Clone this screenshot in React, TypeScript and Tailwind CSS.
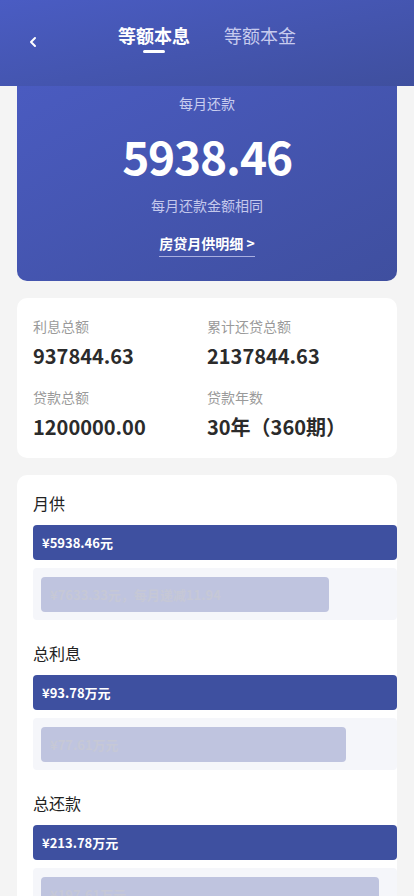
import { ChevronLeft } from "lucide-react";

const font = { fontFamily: '"Noto Sans CJK SC", "Noto Sans", sans-serif' };

const stats = [
  { label: "利息总额", value: "937844.63" },
  { label: "累计还贷总额", value: "2137844.63" },
  { label: "贷款总额", value: "1200000.00" },
  { label: "贷款年数", value: "30年（360期）" },
];

const compare = [
  { title: "月供", main: "¥5938.46元", other: "¥7633.33元，每月递减11.94", width: 288 },
  { title: "总利息", main: "¥93.78万元", other: "¥77.61万元", width: 305 },
  { title: "总还款", main: "¥213.78万元", other: "¥197.61万元", width: 338 },
];

export default function App() {
  return (
    <div
      className="w-[414px] h-[896px] overflow-hidden bg-[#f4f4f4] relative"
      style={font}
    >
      {/* Header */}
      <div className="h-[86px] bg-gradient-to-br from-[#4a5cc3] to-[#3f4f9e] relative flex justify-center">
        <ChevronLeft
          className="absolute left-[25px] top-[34px] text-white"
          size={16}
          strokeWidth={3}
        />
        <div className="flex gap-[34px] pt-[22px]">
          <div className="flex flex-col items-center">
            <span className="text-[18px] font-bold text-white leading-[26px]">
              等额本息
            </span>
            <span className="mt-[2px] w-[22px] h-[3px] bg-white rounded-full" />
          </div>
          <span className="text-[18px] text-[#c7cbee] leading-[26px]">
            等额本金
          </span>
        </div>
      </div>

      {/* Summary card */}
      <div className="mx-[17px] h-[195px] rounded-b-[10px] bg-gradient-to-br from-[#4a5bc0] to-[#3f4f9f] flex flex-col items-center text-center">
        <p className="mt-[7px] text-[14px] leading-[20px] text-[#c9cdef]">每月还款</p>
        <p className="mt-[17px] text-[46px] font-bold leading-[50px] text-white tracking-tight">
          5938.46
        </p>
        <p className="mt-[15px] text-[14px] leading-[20px] text-[#c4c8ec]">每月还款金额相同</p>
        <p className="mt-[18px] text-[14px] font-bold leading-[20px] text-white border-b border-[#a9afe0] pb-[3px]">
          房贷月供明细 &gt;
        </p>
      </div>

      {/* Stats */}
      <div className="mx-[17px] mt-[17px] h-[160px] bg-white rounded-[10px] px-4 pt-[18px] grid grid-cols-2 gap-y-[17px] content-start">
        {stats.map((s) => (
          <div key={s.label}>
            <p className="text-[14px] leading-[20px] text-[#9a9a9a]">{s.label}</p>
            <p className="mt-[6px] text-[20px] font-bold leading-[28px] text-[#2b2b2b]">
              {s.value}
            </p>
          </div>
        ))}
      </div>

      {/* Comparison */}
      <div className="mx-[17px] mt-[17px] bg-white rounded-t-[10px] pl-4 pt-[17px] pb-6">
        {compare.map((c, i) => (
          <div key={c.title} className={i > 0 ? "mt-[22px]" : ""}>
            <p className="text-[16px] leading-[22px] text-[#222]">{c.title}</p>
            <div className="mt-[11px] h-[35px] bg-[#3e50a0] rounded-[4px] flex items-center pl-[9px]">
              <span className="text-[13px] font-bold text-white">{c.main}</span>
            </div>
            <div className="mt-[8px] h-[52px] bg-[#f5f6fa] rounded-[4px] p-[9px_8px]">
              <div
                className="h-[35px] bg-[#bfc4df] rounded-[4px] flex items-center pl-[9px]"
                style={{ width: c.width }}
              >
                <span className="text-[13px] font-bold text-[#c6c8d6] whitespace-nowrap">
                  {c.other}
                </span>
              </div>
            </div>
          </div>
        ))}
      </div>
    </div>
  );
}
